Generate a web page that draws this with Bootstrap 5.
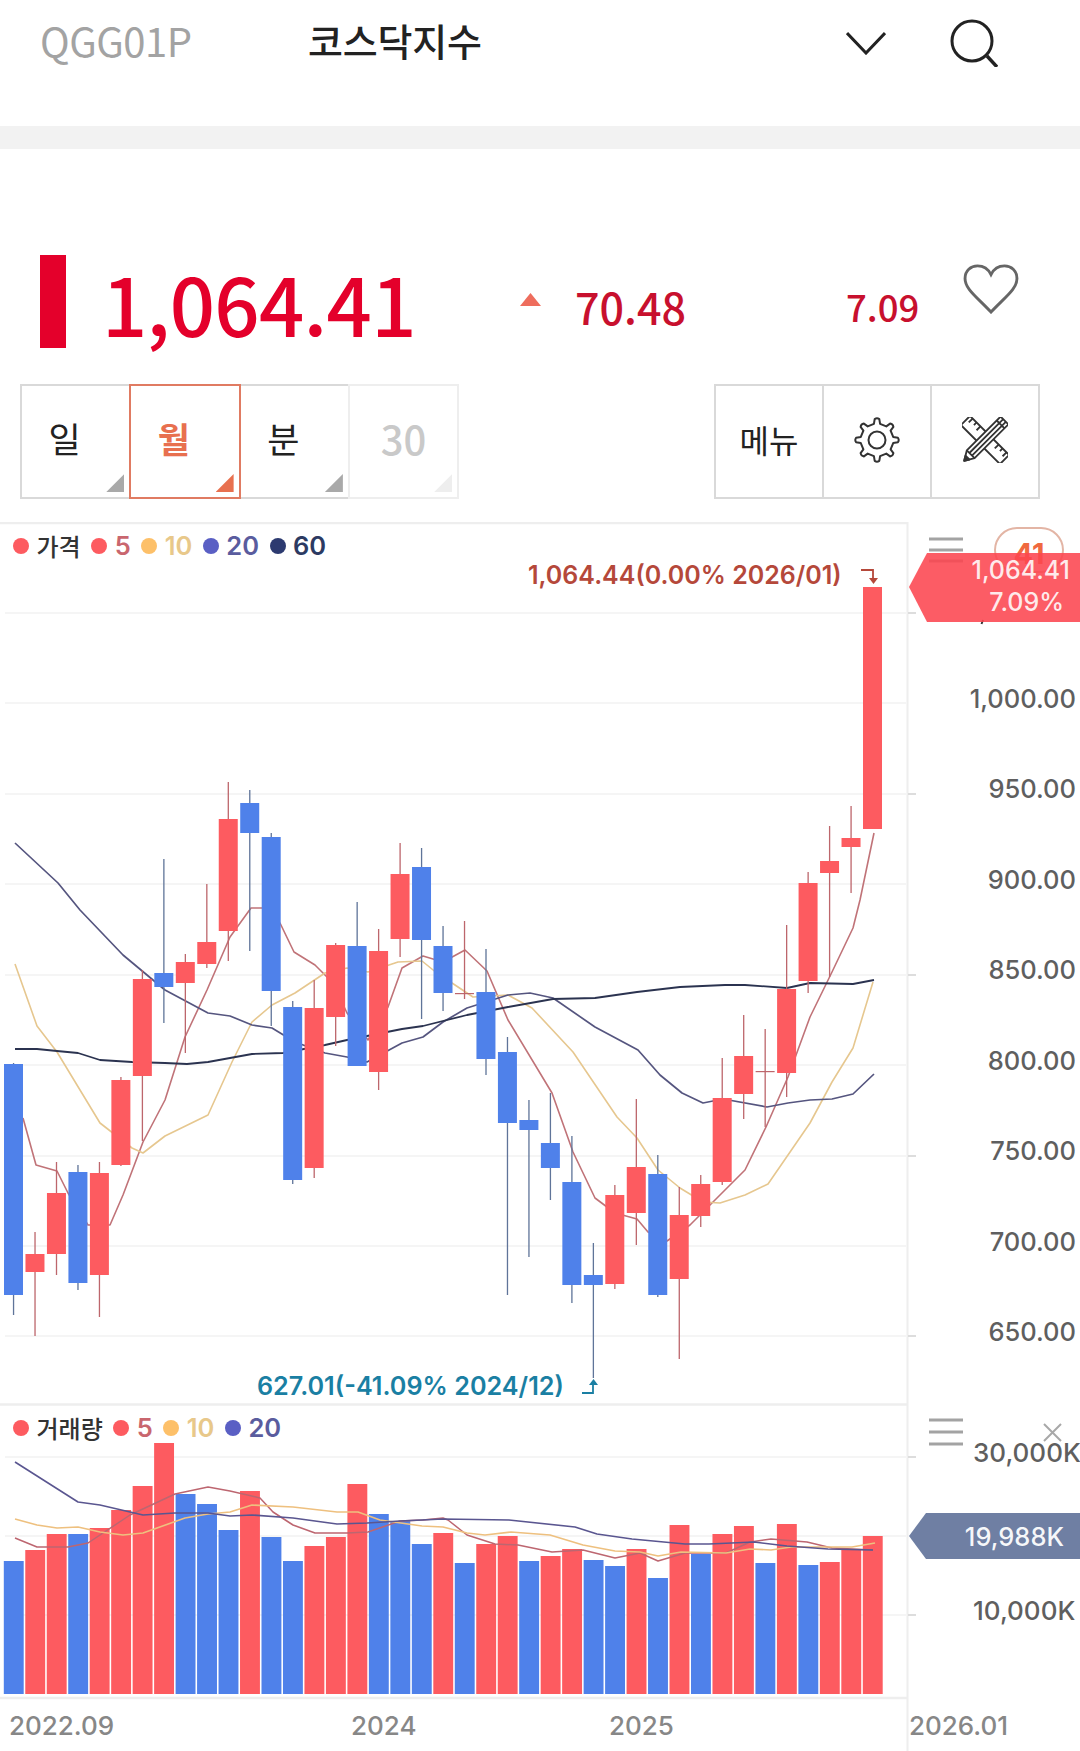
<!DOCTYPE html>
<html lang="ko">
<head>
<meta charset="utf-8">
<title>코스닥지수</title>
<link href="https://cdn.jsdelivr.net/npm/bootstrap@5.3.0/dist/css/bootstrap.min.css" rel="stylesheet">
<style>
html,body{margin:0;background:#fff}
body{font-family:"Noto Sans CJK KR","Noto Sans",sans-serif;width:1080px;height:1751px;overflow:hidden}
.top-bar{height:126px;padding:21px 0 0 40px}
.stock-code{width:268px;font-size:40px;color:#a3a3a3;letter-spacing:-.5px;line-height:1;margin-top:-1px}
.stock-name{font-size:38px;font-weight:500;color:#222;letter-spacing:-.2px;line-height:1;width:538px}
.icon-chevron{width:40px;height:24px;margin:10px 64px 0 0}
.icon-search{width:48px;height:48px;margin-top:-2px}
.band{height:23px;background:#f2f2f2}
.price-row{height:235px;padding-left:40px;position:relative}
.price-flag{width:26px;height:93px;background:#e4002b;margin-top:106px}
.price-now{font-size:79.5px;font-weight:500;color:#e4002b;line-height:1;margin:114px 0 0 36px;width:418px;letter-spacing:-.7px}
.price-arrow{width:21px;height:13px;margin-top:144px;background:#ee6d5d;clip-path:polygon(50% 0,100% 100%,0 100%)}
.price-diff{font-size:43px;font-weight:500;color:#c8102e;line-height:1;margin:136px 0 0 34px;width:271px}
.price-rate{font-size:36.5px;font-weight:500;color:#c8102e;line-height:1;margin:140px 0 0 0;width:117px}
.icon-heart{width:56px;height:50px;margin-top:115px}
.tool-row{height:115px;padding:0 40px 0 20px}
.cell{width:111.3px;height:115px;margin-left:-2px;border:2px solid #d9d9d9;border-radius:0;background:#fff;color:#222;font-size:35px;line-height:1;padding:0 0 8px;position:relative}
.cell:first-child{margin-left:0}
.cell-off{border-color:#eee;color:#c9c9c9;font-weight:500;font-size:40px;padding-bottom:7px}
.cell-on{border-color:#e07b62;color:#e8704f;font-weight:700;z-index:1}
.cell-label{position:relative;left:-11px}
.corner{position:absolute;right:5px;bottom:5px;width:18px;height:18px;background:#a9a9a9;clip-path:polygon(100% 0,100% 100%,0 100%)}
.cell-on .corner{background:#e8704f}
.cell-off .corner{background:#eee}
.cell-tool{width:110px;color:#222;font-size:32px;padding-bottom:6px}
.cell-icon{padding-bottom:3px}
.chart-box{height:1229px;margin-top:23px;position:relative}
.chart-svg{position:absolute;left:0;top:0;display:block}
.legend{position:absolute;left:13px;font-family:Inter,"Noto Sans CJK KR",sans-serif;font-size:25.5px;font-weight:600;line-height:1;white-space:nowrap}
.legend-price{top:11px}
.legend-vol{top:893px}
.dot{display:inline-block;width:16px;height:16px;border-radius:50%;margin-right:7.5px}
.lg-item{display:inline-flex;align-items:center;margin-right:10.5px}
.c-name{color:#333;font-family:"Noto Sans CJK KR",sans-serif;font-size:24px;font-weight:500}
.c-5{color:#c9666e}.c-10{color:#e8c88a}.c-20{color:#5a5c9e}.c-60{color:#2c3a62}
.d-r{background:#fd5b60}.d-y{background:#fdc069}.d-b{background:#5a5fc4}.d-n{background:#2c3a70}
.t{font-family:Inter,"Noto Sans",sans-serif;font-size:25.5px;font-weight:500;dominant-baseline:central}
.t-axis{fill:#5f5f5f}
.t-vol{font-size:26px}
.t-x{fill:#878787;font-size:26px}
.t-hi{fill:#b5483a;font-weight:600;font-size:25px}
.t-lo{fill:#1a7fa3;font-weight:600;font-size:25.2px}
.t-w{fill:#fff;fill-opacity:.88;font-size:25px}
.t-w-vol{fill-opacity:.95;font-size:25.5px}
.t-count{font-size:29px;font-weight:700}
</style>
</head>
<body>
<header class="top-bar d-flex align-items-start">
  <div class="stock-code">QGG01P</div>
  <div class="stock-name">코스닥지수</div>
  <svg class="icon-chevron" viewBox="0 0 40 24" fill="none" stroke="#222" stroke-width="3"><path d="M1 2 20 22 39 2"/></svg>
  <svg class="icon-search" viewBox="0 0 48 48" fill="none" stroke="#222" stroke-width="3"><circle cx="22" cy="22" r="20"/><path d="M37 37 47 48" stroke-width="3.4"/></svg>
</header>
<div class="band"></div>
<section class="price-row d-flex align-items-start">
  <div class="price-flag"></div>
  <div class="price-now">1,064.41</div>
  <div class="price-arrow"></div>
  <div class="price-diff">70.48</div>
  <div class="price-rate">7.09</div>
  <svg class="icon-heart" viewBox="0 0 58 52" fill="none" stroke="#666" stroke-width="3"><path d="M29 50C14 34 2 26 2 15 2 7 8 2 15 2c6 0 11 3 14 9 3-6 8-9 14-9 7 0 13 5 13 13 0 11-12 19-27 35z"/></svg>
</section>
<nav class="tool-row d-flex justify-content-between">
  <div class="d-flex">
    <button type="button" class="btn cell"><span class="cell-label">일</span><span class="corner"></span></button>
    <button type="button" class="btn cell cell-on"><span class="cell-label">월</span><span class="corner"></span></button>
    <button type="button" class="btn cell"><span class="cell-label">분</span><span class="corner"></span></button>
    <button type="button" class="btn cell cell-off">30<span class="corner"></span></button>
  </div>
  <div class="d-flex">
    <button type="button" class="btn cell cell-tool">메뉴</button>
    <button type="button" class="btn cell cell-tool cell-icon">
      <svg width="46" height="46" viewBox="-23 -23 46 46" fill="none" stroke="#333" stroke-width="2"><path id="gear" stroke-linejoin="round"/><circle r="8.5"/></svg>
    </button>
    <button type="button" class="btn cell cell-tool cell-icon">
      <svg width="46" height="46" viewBox="-25 -25 50 50" fill="none" stroke="#333" stroke-width="2" stroke-linejoin="round">
        <g transform="rotate(45)">
          <rect x="-30" y="-7" width="60" height="14"/>
          <path d="M-26-7v6M-20-7v4M-14-7v6M14-7v6M20-7v4M26-7v6"/>
        </g>
        <g transform="rotate(-45)">
          <path d="M-32 0-22-6H30V6H-22z" fill="#fff"/>
          <path d="M-22-6V6M-22-2H30M-22 2H30M24-6V6"/>
          <path d="M-32 0-27-3V3z" fill="#333"/>
        </g>
      </svg>
    </button>
  </div>
</nav>
<section class="chart-box">
  <svg id="chart" class="chart-svg" width="1080" height="1229" viewBox="0 522 1080 1229" fill="none">
    <g id="grid"></g>
    <g id="pricelines"></g>
    <g id="candles"></g>
    <g id="bars"></g>
    <g id="vollines"></g>
    <path d="M0 523H907M0 1404.500H907M0 1698H907" stroke="#eee" stroke-width="2.500"/>
    <path d="M907.500 522V1751" stroke="#eee" stroke-width="2"/>
    <path d="M908 613h8M908 794h8M908 975h8M908 1156h8M908 1336h8M908 1457h8M908 1615h8" stroke="#ddd" stroke-width="2"/>

    <text class="t t-axis" x="1076" y="698" text-anchor="end">1,000.00</text>
    <text class="t t-axis" x="1076" y="788" text-anchor="end">950.00</text>
    <text class="t t-axis" x="1076" y="879" text-anchor="end">900.00</text>
    <text class="t t-axis" x="1076" y="969" text-anchor="end">850.00</text>
    <text class="t t-axis" x="1076" y="1060" text-anchor="end">800.00</text>
    <text class="t t-axis" x="1076" y="1150" text-anchor="end">750.00</text>
    <text class="t t-axis" x="1076" y="1241" text-anchor="end">700.00</text>
    <text class="t t-axis" x="1076" y="1331" text-anchor="end">650.00</text>
    <text class="t t-axis t-vol" x="973" y="1452">30,000K</text>
    <text class="t t-axis t-vol" x="973" y="1610">10,000K</text>

    <text class="t t-x" x="9" y="1725">2022.09</text>
    <text class="t t-x" x="351" y="1725">2024</text>
    <text class="t t-x" x="609" y="1725">2025</text>
    <text class="t t-x" x="909" y="1725">2026.01</text>

    <text class="t t-hi" x="528" y="575">1,064.44(0.00% 2026/01)</text>
    <path d="M861 570H873V579" stroke="#b5483a" stroke-width="1.800"/><path d="M869 578H878L873.500 584z" fill="#b5483a"/>
    <text class="t t-lo" x="257" y="1386">627.01(-41.09% 2024/12)</text>
    <path d="M582 1393H593V1384" stroke="#1a7fa3" stroke-width="1.800"/><path d="M589 1385H598L593.500 1379z" fill="#1a7fa3"/>

    <path d="M929 539h34M929 550h34M929 561h34" stroke="#a3a3a3" stroke-width="3"/>
    <rect x="995" y="528" width="68" height="44" rx="22" stroke="#e3b5a5" stroke-width="2"/>
    <text class="t t-count" x="1029" y="553" text-anchor="middle" fill="#f0693f">41</text>
    <path d="M983 620l-1.500 4" stroke="#333" stroke-width="2"/>
    <path d="M909 587 927 553H1080V622H927z" fill="#fc4650" fill-opacity=".88"/>
    <text class="t t-w" x="1070" y="570" text-anchor="end">1,064.41</text>
    <text class="t t-w" x="1064" y="602" text-anchor="end">7.09%</text>

    <path d="M929 1420h34M929 1432h34M929 1444h34" stroke="#a3a3a3" stroke-width="3"/>
    <path d="M1044 1424l17 17M1061 1424l-17 17" stroke="#a8a8a8" stroke-width="2"/>
    <path d="M909 1536 926 1513H1080V1559H926z" fill="#6f7fa3"/>
    <text class="t t-w t-w-vol" x="1064" y="1536" text-anchor="end">19,988K</text>
  </svg>
  <div class="legend legend-price d-flex">
    <span class="lg-item"><i class="dot d-r"></i><span class="c-name">가격</span></span>
    <span class="lg-item"><i class="dot d-r"></i><span class="c-5">5</span></span>
    <span class="lg-item"><i class="dot d-y"></i><span class="c-10">10</span></span>
    <span class="lg-item"><i class="dot d-b"></i><span class="c-20">20</span></span>
    <span class="lg-item"><i class="dot d-n"></i><span class="c-60">60</span></span>
  </div>
  <div class="legend legend-vol d-flex">
    <span class="lg-item"><i class="dot d-r"></i><span class="c-name">거래량</span></span>
    <span class="lg-item"><i class="dot d-r"></i><span class="c-5">5</span></span>
    <span class="lg-item"><i class="dot d-y"></i><span class="c-10">10</span></span>
    <span class="lg-item"><i class="dot d-b"></i><span class="c-20">20</span></span>
  </div>
</section>
<script src="https://cdn.jsdelivr.net/npm/bootstrap@5.3.0/dist/js/bootstrap.bundle.min.js"></script>
<script>
(function(){
  var RED='#fd5b60',BLUE='#4f81ea',WR='#bd666c',WB='#5f7499';
  // color, wickTop, bodyTop, bodyBottom, wickBottom
  var C=[
  ['b',1063,1064,1295,1315],['r',1232,1254,1272,1336],['r',1162,1193,1254,1275],['b',1165,1172,1283,1290],['r',1162,1173,1275,1317],
  ['r',1077,1080,1165,1166],['r',970,979,1076,1141],['b',859,973,987,1023],['r',954,962,983,1053],['r',884,942,964,968],
  ['r',782,819,931,961],['b',790,803,833,951],['b',833,837,991,1026],['b',1001,1007,1180,1184],['r',980,1008,1168,1178],
  ['r',943,945,1017,1046],['b',902,946,1066,1066],['r',929,951,1072,1090],['r',843,874,939,957],['b',848,867,940,1019],
  ['b',926,946,993,1011],['r',921,993,994,999],['b',949,992,1059,1075],['b',1037,1052,1123,1295],['b',1100,1120,1130,1257],
  ['b',1093,1143,1168,1200],['b',1136,1182,1285,1303],['b',1243,1275,1285,1378],['r',1185,1195,1284,1289],['r',1099,1167,1213,1245],
  ['b',1155,1174,1295,1297],['r',1187,1215,1279,1359],['r',1175,1184,1216,1227],['r',1058,1098,1182,1185],['r',1015,1056,1094,1119],
  ['r',1029,1071,1072,1127],['r',925,989,1073,1097],['r',872,883,981,993],['r',826,861,873,977],['r',806,838,847,893],['r',587,587,829,829]];
  var V=[1561,1550,1534,1534,1528,1510,1486,1443,1494,1504,1530,1491,1537,1561,1546,1537,1484,1514,1521,1544,1533,1563,1544,1536,1561,1556,1549,1560,1566,1549,1578,1525,1554,1534,1526,1563,1524,1565,1562,1549,1536];
  var VB=[1,4,9,10,11,13,14,18,19,20,22,25,28,29,31,33,36,38];
  var P5=[23,1118,36,1165,57,1171,68,1193,88,1225,110,1225,123,1195,143,1142,165,1100,185,1037,207,990,230,937,251,908,262,908,280,923,294,952,315,965,333,983,347,1013,368,1040,388,1007,402,968,423,956,443,962,465,950,487,971,508,1020,552,1093,573,1152,595,1198,615,1213,637,1219,648,1232,667,1241,690,1225,712,1203,745,1170,766,1127,788,1077,810,1017,832,972,853,928,860,900,874,833];
  var P10=[15,964,37,1026,57,1052,100,1123,132,1148,143,1153,165,1136,208,1115,232,1062,252,1022,272,1005,295,993,325,973,347,968,368,972,398,962,422,961,443,978,452,983,473,997,508,995,532,1008,573,1052,617,1117,637,1138,658,1170,680,1188,703,1202,720,1203,745,1195,768,1184,788,1155,810,1123,832,1082,853,1048,873,982];
  var P20=[15,843,58,883,80,910,123,955,165,990,208,1013,230,1016,252,1025,272,1028,295,1042,325,1053,347,1057,367,1062,402,1043,423,1037,443,1022,467,1008,508,995,530,993,553,998,595,1027,638,1050,660,1075,682,1093,703,1103,723,1099,767,1107,788,1103,810,1100,832,1099,853,1094,874,1074];
  var P60=[15,1049,37,1049,57,1051,78,1053,100,1060,132,1062,165,1063,187,1064,208,1062,252,1054,283,1053,325,1045,347,1040,402,1029,423,1026,467,1015,508,1007,553,999,595,998,637,992,680,987,725,985,745,985,787,988,810,983,853,984,874,980];
  var V5=[15,1538,37,1547,68,1547,88,1543,130,1515,175,1494,208,1487,230,1491,260,1498,273,1512,293,1525,315,1533,347,1533,368,1532,400,1521,423,1520,443,1518,448,1520,467,1535,495,1544,518,1545,552,1552,583,1550,615,1558,640,1553,658,1561,685,1553,726,1553,750,1542,771,1539,807,1542,832,1548,873,1550];
  var V10=[15,1519,37,1525,57,1528,78,1527,100,1532,123,1535,143,1533,185,1518,208,1514,230,1512,252,1505,293,1507,337,1512,358,1512,380,1520,422,1526,443,1527,467,1533,485,1535,511,1532,550,1535,583,1545,615,1551,640,1552,658,1556,681,1552,726,1553,750,1549,771,1550,791,1547,832,1547,852,1547,875,1543];
  var V20=[15,1462,78,1502,100,1505,143,1515,175,1513,208,1513,230,1516,252,1515,293,1518,337,1524,367,1523,400,1521,443,1519,509,1520,575,1527,597,1534,632,1539,685,1544,709,1544,754,1542,787,1546,828,1549,873,1550];
  var NS='http://www.w3.org/2000/svg';
  function el(parent,tag,attrs){var e=document.createElementNS(NS,tag);for(var k in attrs)e.setAttribute(k,attrs[k]);document.getElementById(parent).appendChild(e);return e;}
  function line(parent,pts,color,w){var d='';for(var i=0;i<pts.length;i+=2)d+=(i?'L':'M')+pts[i]+' '+pts[i+1];el(parent,'path',{d:d,stroke:color,'stroke-width':w,'stroke-linejoin':'round',fill:'none'});}
  var g=[613,703,794,884,975,1065,1156,1246,1336,1457,1536,1615];
  g.forEach(function(y){el('grid','path',{d:'M5 '+y+'H906',stroke:'#f5f5f5','stroke-width':2});});
  line('pricelines',P5,'#c07378',1.6);line('pricelines',P10,'#e6c78f',1.6);line('pricelines',P20,'#55557f',1.7);line('pricelines',P60,'#2b3350',1.8);
  C.forEach(function(c,i){
    var x=13.5+i*21.475,red=c[0]=='r';
    el('candles','rect',{x:x-.6,y:c[1],width:1.3,height:c[4]-c[1],fill:red?WR:WB});
    var doji=c[3]-c[2]<2;
    el('candles','rect',{x:x-9.5,y:c[2],width:19,height:Math.max(c[3]-c[2],1.2),fill:doji?WR:(red?RED:BLUE)});
    el('bars','rect',{x:x-9.7,y:V[i],width:19.9,height:1694-V[i],fill:VB.indexOf(i+1)>=0?BLUE:RED});
  });
  line('vollines',V5,'#bd6670',1.5);line('vollines',V10,'#eec07f',1.6);line('vollines',V20,'#5a5690',1.6);
  // gear outline
  var d='',N=8;
  for(var i=0;i<N;i++){
    var a=i/N*Math.PI*2-Math.PI/2,s=Math.PI*2/N,R=21,r=16.5,p=[[a-s*.24,r],[a-s*.14,R],[a+s*.14,R],[a+s*.24,r]];
    p.forEach(function(q,j){var X=(q[1]*Math.cos(q[0])).toFixed(1),Y=(q[1]*Math.sin(q[0])).toFixed(1);d+=(i==0&&j==0?'M':(j==2?'Q'+(22.5*Math.cos(a)).toFixed(1)+' '+(22.5*Math.sin(a)).toFixed(1)+' ':'L'))+X+' '+Y;});
  }
  document.getElementById('gear').setAttribute('d',d+'Z');
})();
</script>
</body>
</html>
